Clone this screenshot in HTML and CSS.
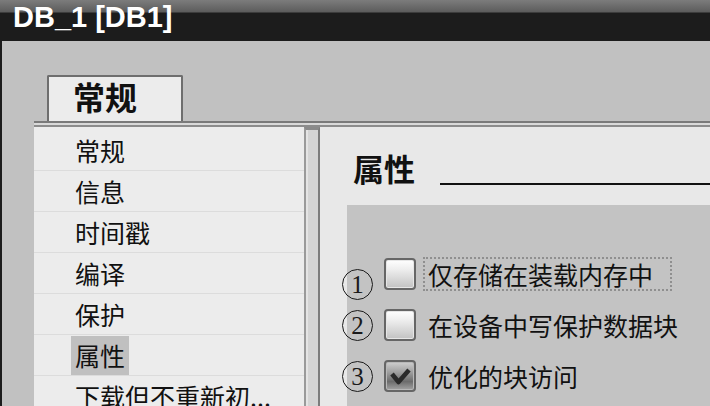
FILE: index.html
```html
<!DOCTYPE html>
<html lang="zh">
<head>
    <meta charset="UTF-8">
    <title>DB_1 [DB1]</title>
    <link rel="stylesheet" href="styles.css">
</head>
<body>
    <!-- Titelbalk -->
    <div class="titlebar">DB_1 [DB1]</div>

    <div class="window">
        <!-- Tab -->
        <div class="tabs">
            <div class="tab">常规</div>
        </div>
        <div class="tabline"></div>

        <div class="content">
            <!-- Navigatie links -->
            <div class="nav">
                <div class="nav-item"><span class="nav-label">常规</span></div>
                <div class="nav-item"><span class="nav-label">信息</span></div>
                <div class="nav-item"><span class="nav-label">时间戳</span></div>
                <div class="nav-item"><span class="nav-label">编译</span></div>
                <div class="nav-item"><span class="nav-label">保护</span></div>
                <div class="nav-item"><span class="nav-label selected">属性</span></div>
                <div class="nav-item"><span class="nav-label">下载但不重新初...</span></div>
            </div>
            <div class="splitter"></div>

            <!-- Eigenschappen -->
            <div class="panel">
                <div class="panel-head">
                    <span class="panel-title">属性</span>
                    <span class="panel-rule"></span>
                </div>
                <div class="options">
                    <div class="option">
                        <span class="marker marker-low">1</span>
                        <span class="check"></span>
                        <span class="option-label focused">仅存储在装载内存中</span>
                    </div>
                    <div class="option">
                        <span class="marker">2</span>
                        <span class="check"></span>
                        <span class="option-label">在设备中写保护数据块</span>
                    </div>
                    <div class="option">
                        <span class="marker">3</span>
                        <span class="check checked">
                            <svg width="28" height="28" viewBox="0 0 28 28"><path d="M6 12 L12.5 20 L23 8" fill="none" stroke="#2a2a2a" stroke-width="4.5" stroke-linejoin="round"/></svg>
                        </span>
                        <span class="option-label">优化的块访问</span>
                    </div>
                </div>
            </div>
        </div>
    </div>
</body>
</html>
```

FILE: styles.css
```css
body {
    margin: 0;
    width: 710px;
    height: 406px;
    overflow: hidden;
    font-family: "Noto Sans CJK SC", sans-serif;
    color: #111;
    background-color: #c1c1c1;
}
.titlebar {
    height: 41px;
    box-sizing: border-box;
    padding: 1px 0 0 13px;
    line-height: 32px;
    font-family: "Liberation Sans", Arial, sans-serif;
    font-size: 29px;
    font-weight: bold;
    color: #fff;
    background: linear-gradient(#7c7c7c 0, #5c5c5c 12px, #1c1c1c 13px, #1c1c1c 100%);
}
.window {
    height: 365px;
    box-sizing: border-box;
    padding: 34px 0 0 32px;
    border-left: 2px solid #1c1c1c;
    display: flex;
    flex-direction: column;
}
.tabs {
    display: flex;
    padding-left: 13px;
}
.tab {
    width: 132px;
    height: 44px;
    border: 2px solid #6e6e6e;
    border-bottom: none;
    border-radius: 2px 2px 0 0;
    background-color: #ececec;
    font-size: 32px;
    font-weight: bold;
    line-height: 38px;
    text-indent: 24px;
}
.tabline {
    height: 2px;
    border-top: 2px solid #7a7a7a;
    border-bottom: 2px solid #8c8c8c;
    background-color: #d9d9d9;
}
.content {
    flex: 1;
    display: flex;
    min-height: 0;
}
.nav {
    width: 270px;
    padding-top: 3px;
    background-color: #ececec;
}
.nav-item {
    height: 40px;
    border-bottom: 1px solid #dcdcdc;
    display: flex;
    align-items: flex-end;
    padding-left: 37px;
    font-size: 25px;
    white-space: nowrap;
}
.nav-label {
    height: 39px;
    line-height: 39px;
    padding: 0 4px;
}
.nav-label.selected {
    background-color: #c0c0c0;
}
.splitter {
    width: 12px;
    border-left: 2px solid #9a9a9a;
    border-right: 2px solid #7c7c7c;
    border-top: 3px solid #8a8a8a;
    background-color: #d4d4d4;
    box-shadow: inset 2px 0 #e4e4e4;
}
.panel {
    flex: 1;
    display: flex;
    flex-direction: column;
    padding: 21px 0 0 27px;
    background-color: #e8e8e8;
}
.panel-head {
    height: 40px;
    display: flex;
    align-items: flex-end;
    padding-left: 6px;
}
.panel-title {
    font-size: 31px;
    font-weight: bold;
    line-height: 40px;
}
.panel-rule {
    flex: 1;
    height: 2px;
    margin: 0 0 3px 25px;
    background-color: #111;
}
.options {
    flex: 1;
    margin-top: 17px;
    padding-top: 51px;
    background-color: #c3c3c3;
    display: flex;
    flex-direction: column;
    gap: 15px;
}
.option {
    height: 36px;
    display: flex;
    align-items: center;
}
.marker {
    width: 31px;
    height: 31px;
    box-sizing: border-box;
    margin-left: -5px;
    border: 1.5px solid #1a1a1a;
    border-radius: 50%;
    font-family: "Liberation Serif", serif;
    font-size: 25px;
    line-height: 29px;
    text-align: center;
    color: #1a1a1a;
}
.marker-low {
    margin-top: 20px;
}
.check {
    width: 32px;
    height: 32px;
    box-sizing: border-box;
    margin-left: 11px;
    border: 2px solid #666;
    border-radius: 4px;
    background: linear-gradient(#ffffff 0, #ededed 35%, #c2c2c2 100%);
    box-shadow: inset 0 0 0 1px #e6e6e6;
}
.check.checked {
    background: linear-gradient(#cfcfcf 0, #9a9a9a 40%, #6c6c6c 70%, #a4a4a4 100%);
    box-shadow: inset 0 0 0 1px #b8b8b8;
}
.check svg {
    display: block;
}
.option-label {
    margin-left: 7px;
    height: 34px;
    box-sizing: border-box;
    padding: 0 17px 0 3px;
    border: 2px dotted transparent;
    font-size: 25px;
    line-height: 30px;
    white-space: nowrap;
}
.option-label.focused {
    border-color: #8f8f8f;
}
```
